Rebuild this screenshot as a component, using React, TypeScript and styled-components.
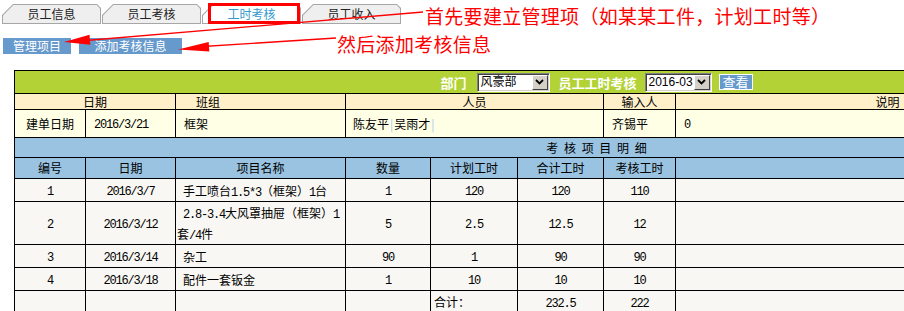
import React from 'react';
import styled, { createGlobalStyle } from 'styled-components';

const GlobalStyle = createGlobalStyle`
  html, body {
    margin: 0;
    padding: 0;
    overflow: hidden;
    background: #fff;
  }
  body {
    font-family: "Noto Sans CJK SC", "Liberation Sans", sans-serif;
    font-size: 12px;
    color: #000;
  }
`;

const Page = styled.div`
  position: relative;
  width: 904px;
  height: 311px;
  overflow: hidden;
`;

const Tabs = styled.div`
  display: flex;
  gap: 1px;
  padding: 4px 0 0 2px;
`;

const Tab = styled.div<{ $active?: boolean }>`
  width: 99px;
  height: 20px;
  padding: 1px;
  box-sizing: border-box;
  background: #a6a6a6;
  clip-path: polygon(0 11px, 11px 0, calc(100% - 4px) 0, 100% 4px, 100% 100%, 0 100%);

  span {
    display: block;
    height: 100%;
    background: ${p => (p.$active ? '#fff' : '#efefef')};
    clip-path: polygon(0 10.4px, 10.4px 0, calc(100% - 3.4px) 0, 100% 3.4px, 100% 100%, 0 100%);
    text-align: center;
    line-height: 18px;
    color: ${p => (p.$active ? '#3399cc' : '#222')};
  }
`;

const Actions = styled.div`
  display: flex;
  gap: 8px;
  padding: 14px 0 0 3px;
`;

const ActionBtn = styled.button<{ $w: number }>`
  width: ${p => p.$w}px;
  height: 16px;
  padding: 0;
  border: 0;
  background: #6699cc;
  color: #fff;
  font: 12px/16px "Noto Sans CJK SC", sans-serif;
`;

const Sheet = styled.table`
  margin: 16px 0 0 14px;
  width: 1164px;
  table-layout: fixed;
  border-collapse: collapse;
  border: 1px solid #000;
`;

const Row = styled.tr<{ $bg: string; $h: number }>`
  background: ${p => p.$bg};

  & > td {
    height: ${p => p.$h}px;
  }
`;

const Cell = styled.td<{ $align?: 'left' | 'center'; $pad?: number; $indent?: number; $lh?: number }>`
  border: 1px solid #000;
  padding: 0 0 0 ${p => p.$pad ?? 0}px;
  text-align: ${p => p.$align ?? 'center'};
  text-indent: ${p => p.$indent ?? 0}px;
  vertical-align: middle;
  line-height: ${p => p.$lh ?? 14}px;
  font-size: 12px;
  overflow: hidden;
`;

const Section = styled(Cell)`
  word-spacing: 3px;
`;

const Num = styled.span`
  font-family: "Liberation Mono", monospace;
  font-size: 12px;
  line-height: 1;
  letter-spacing: -1.2px;
`;

const Sep = styled.span`
  color: #a6c8ee;
  margin: 0 1px;
`;

const Filters = styled.div`
  display: inline-flex;
  align-items: center;
  vertical-align: middle;
`;

const Label = styled.span<{ $gap: number }>`
  color: #fff;
  font-weight: 700;
  font-size: 13px;
  line-height: 19px;
  margin-right: ${p => p.$gap}px;
`;

const Select = styled.div<{ $w: number; $gap: number }>`
  display: flex;
  align-items: center;
  justify-content: space-between;
  width: ${p => p.$w}px;
  height: 19px;
  box-sizing: border-box;
  margin-right: ${p => p.$gap}px;
  background: #fff;
  border: 1px solid;
  border-color: #808080 #fff #fff #808080;
  box-shadow: inset 1px 1px 0 #404040, inset -1px -1px 0 #d4d0c8;
  padding: 1px 1px 1px 3px;
  font: 12px/15px "Liberation Sans", "Noto Sans CJK SC", sans-serif;
  text-align: left;
`;

const Drop = styled.span`
  display: flex;
  align-items: center;
  justify-content: center;
  width: 16px;
  height: 15px;
  box-sizing: border-box;
  background: #d4d0c8;
  border: 1px solid;
  border-color: #fff #404040 #404040 #fff;
`;

const ViewBtn = styled.span`
  display: inline-block;
  width: 34px;
  height: 16px;
  box-sizing: border-box;
  border: 1px solid #fff;
  background: #6699cc;
  color: #fff;
  font-size: 13px;
  line-height: 14px;
  text-align: center;
`;

const Overlay = styled.svg`
  position: absolute;
  left: 0;
  top: 0;
  pointer-events: none;
`;

const Mark = styled.div`
  position: absolute;
  left: 208px;
  top: 3px;
  width: 92px;
  height: 21px;
  box-sizing: border-box;
  border: 3px solid #ff0000;
`;

const Note = styled.div<{ $x: number; $y: number }>`
  position: absolute;
  left: ${p => p.$x}px;
  top: ${p => p.$y}px;
  color: #ff0000;
  font-size: 19px;
  line-height: 20px;
  letter-spacing: 0.3px;
  white-space: nowrap;
`;

const mix = (s: string) =>
  s.split(/([\x21-\x7e]+)/).map((part, i) =>
    /[\x21-\x7e]/.test(part) ? <Num key={i}>{part}</Num> : part
  );

const Chevron = () => (
  <svg width="9" height="6" viewBox="0 0 9 6">
    <polyline points="1,1 4.5,4.5 8,1" fill="none" stroke="#000" strokeWidth="1.8" />
  </svg>
);

const items = [
  { no: '1', date: '2016/3/7', name: '手工喷台1.5*3（框架）1台', qty: '1', plan: '120', total: '120', check: '110', h: 22 },
  { no: '2', date: '2016/3/12', name: '2.8-3.4大风罩抽屉（框架）1套/4件', qty: '5', plan: '2.5', total: '12.5', check: '12', h: 42 },
  { no: '3', date: '2016/3/14', name: '杂工', qty: '90', plan: '1', total: '90', check: '90', h: 22 },
  { no: '4', date: '2016/3/18', name: '配件一套钣金', qty: '1', plan: '10', total: '10', check: '10', h: 22 },
];

const cols = [71, 90, 170, 85, 87, 86, 72, 424, 79];

export default function App() {
  return (
    <Page>
      <GlobalStyle />
      <Tabs>
        <Tab><span>员工信息</span></Tab>
        <Tab><span>员工考核</span></Tab>
        <Tab $active><span>工时考核</span></Tab>
        <Tab><span>员工收入</span></Tab>
      </Tabs>

      <Actions>
        <ActionBtn $w={68}>管理项目</ActionBtn>
        <ActionBtn $w={103}>添加考核信息</ActionBtn>
      </Actions>

      <Sheet>
        <colgroup>
          {cols.map((w, i) => (
            <col key={i} style={{ width: w }} />
          ))}
        </colgroup>
        <tbody>
          <Row $bg="#b2d235" $h={22}>
            <Cell colSpan={9}>
              <Filters>
                <Label $gap={10}>部门</Label>
                <Select $w={73} $gap={9}>
                  风豪部
                  <Drop><Chevron /></Drop>
                </Select>
                <Label $gap={8}>员工工时考核</Label>
                <Select $w={67} $gap={7}>
                  2016-03
                  <Drop><Chevron /></Drop>
                </Select>
                <ViewBtn>查看</ViewBtn>
              </Filters>
            </Cell>
          </Row>

          <Row $bg="#fff0ca" $h={15}>
            <Cell colSpan={2}>日期</Cell>
            <Cell $align="left" $pad={20}>班组</Cell>
            <Cell colSpan={3}>人员</Cell>
            <Cell>输入人</Cell>
            <Cell>说明</Cell>
            <Cell />
          </Row>

          <Row $bg="#ffffe6" $h={27}>
            <Cell>建单日期</Cell>
            <Cell $align="left" $pad={8}>{mix('2016/3/21')}</Cell>
            <Cell $align="left" $pad={8}>框架</Cell>
            <Cell colSpan={3} $align="left" $pad={7}>
              陈友平<Sep>|</Sep>吴雨才<Sep>|</Sep>
            </Cell>
            <Cell $align="left" $pad={8}>齐锡平</Cell>
            <Cell $align="left" $pad={8}>{mix('0')}</Cell>
            <Cell />
          </Row>

          <Row $bg="#99c3e1" $h={19}>
            <Section colSpan={9}>考 核 项 目 明 细</Section>
          </Row>

          <Row $bg="#99c3e1" $h={20}>
            <Cell>编号</Cell>
            <Cell>日期</Cell>
            <Cell>项目名称</Cell>
            <Cell>数量</Cell>
            <Cell>计划工时</Cell>
            <Cell>合计工时</Cell>
            <Cell>考核工时</Cell>
            <Cell colSpan={2} />
          </Row>

          {items.map(it => (
            <Row key={it.no} $bg="#f8f7f3" $h={it.h}>
              <Cell>{mix(it.no)}</Cell>
              <Cell>{mix(it.date)}</Cell>
              <Cell $align="left" $pad={1} $indent={6} $lh={21}>{mix(it.name)}</Cell>
              <Cell>{mix(it.qty)}</Cell>
              <Cell>{mix(it.plan)}</Cell>
              <Cell>{mix(it.total)}</Cell>
              <Cell>{mix(it.check)}</Cell>
              <Cell colSpan={2} />
            </Row>
          ))}

          <Row $bg="#f8f7f3" $h={22}>
            <Cell />
            <Cell />
            <Cell />
            <Cell />
            <Cell $align="left" $pad={3}>合计：</Cell>
            <Cell>{mix('232.5')}</Cell>
            <Cell>{mix('222')}</Cell>
            <Cell colSpan={2} />
          </Row>
        </tbody>
      </Sheet>

      <Mark />
      <Overlay width="904" height="311" viewBox="0 0 904 311">
        <line x1="423" y1="12" x2="80" y2="41" stroke="#ff0000" strokeWidth="1.3" />
        <polygon points="64,42 90.3,44.7 89.5,34.7" fill="#ff0000" />
        <line x1="336" y1="38" x2="195" y2="47" stroke="#ff0000" strokeWidth="1.3" />
        <polygon points="178,49.5 209.3,51.5 208.7,42" fill="#ff0000" />
      </Overlay>
      <Note $x={425} $y={6}>首先要建立管理项（如某某工件，计划工时等）</Note>
      <Note $x={337} $y={34}>然后添加考核信息</Note>
    </Page>
  );
}
